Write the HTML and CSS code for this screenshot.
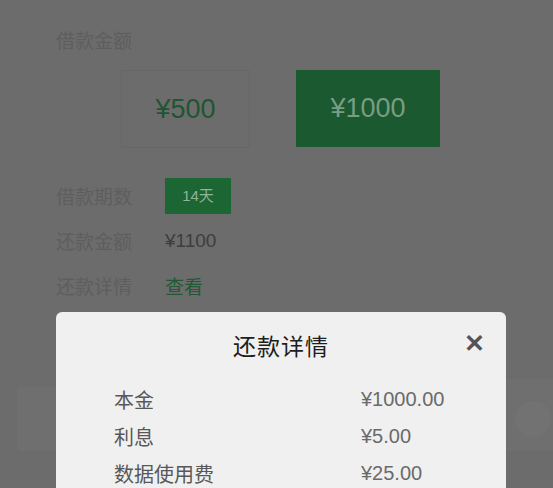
FILE: index.html
```html
<!DOCTYPE html>
<html lang="zh-CN">
<head>
  <meta charset="UTF-8">
  <meta name="viewport" content="width=device-width, initial-scale=1.0">
  <title>借款</title>
  <link rel="stylesheet" href="styles.css">
</head>
<body>
  <!-- 借款表单（被遮罩） -->
  <div class="page">
    <div class="section-title">借款金额</div>
    <div class="amounts">
      <div class="amount">¥500</div>
      <div class="amount selected">¥1000</div>
    </div>

    <div class="row">
      <span class="label">借款期数</span>
      <span class="tag">14天</span>
    </div>
    <div class="row">
      <span class="label">还款金额</span>
      <span class="value">¥1100</span>
    </div>
    <div class="row">
      <span class="label">还款详情</span>
      <span class="link">查看</span>
    </div>
    <div class="row">
      <span class="label">借款用途</span>
      <span class="value">借记卡</span>
    </div>

    <div class="bottom-bar">
      <div class="submit">立即借款</div>
      <div class="side-btn"><span class="dot"></span></div>
    </div>
  </div>

  <!-- 还款详情弹窗 -->
  <div class="modal">
    <div class="modal-head">
      <h2>还款详情</h2>
      <span class="close">✕</span>
    </div>
    <div class="detail">
      <span>本金</span>
      <span class="num">¥1000.00</span>
    </div>
    <div class="detail">
      <span>利息</span>
      <span class="num">¥5.00</span>
    </div>
    <div class="detail">
      <span>数据使用费</span>
      <span class="num">¥25.00</span>
    </div>
  </div>
</body>
</html>
```

FILE: styles.css
```css
body {
  margin: 0;
  background: #6c6c6c;
  font-family: "Liberation Sans", "Noto Sans CJK SC", sans-serif;
  overflow: hidden;
}
.page {
  padding: 28px 0 0 56px;
}
.section-title {
  font-size: 19px;
  line-height: 28px;
  color: #5e5e5e;
}
.amounts {
  display: flex;
  gap: 46px;
  margin: 14px 0 0 65px;
}
.amount {
  width: 127px;
  height: 76px;
  border: 1px solid #676767;
  display: flex;
  align-items: center;
  justify-content: center;
  font-size: 27px;
  color: #1f5632;
}
.amount.selected {
  width: 144px;
  height: 77px;
  border: none;
  background: #1b5930;
  color: #789d84;
}
.row {
  display: flex;
  align-items: center;
  height: 45px;
  font-size: 19px;
}
.amounts + .row {
  margin-top: 25px;
}
.label {
  width: 109px;
  color: #5e5e5e;
}
.tag {
  background: #1b6632;
  color: #8fb49a;
  font-size: 15px;
  width: 66px;
  height: 36px;
  line-height: 36px;
  text-align: center;
}
.value {
  color: #3d3d3d;
}
.link {
  color: #1f5a33;
}
.bottom-bar {
  display: flex;
  align-items: center;
  margin: 34px 0 0 -39px;
  height: 64px;
}
.submit {
  flex: 1;
  height: 64px;
  line-height: 64px;
  background: #6f6f6f;
  border-radius: 4px;
  color: #747474;
  font-size: 22px;
  padding-left: 213px;
}
.side-btn {
  width: 61px;
  height: 80px;
  background: #6f6f6f;
  border-radius: 12px 0 0 12px;
  display: flex;
  align-items: center;
  justify-content: center;
}
.dot {
  width: 36px;
  height: 36px;
  border-radius: 50%;
  background: #727272;
  margin-left: 20px;
}
.modal {
  position: absolute;
  left: 56px;
  top: 312px;
  width: 450px;
  height: 200px;
  background: #f0f0f0;
  border-radius: 6px;
}
.modal-head {
  position: relative;
  height: 66px;
  display: flex;
  align-items: center;
  justify-content: center;
}
.modal-head h2 {
  margin: 0;
  font-size: 23px;
  font-weight: normal;
  color: #1e1e1e;
  letter-spacing: 1px;
}
.close {
  position: absolute;
  right: 21px;
  top: 17px;
  font-size: 25px;
  font-weight: bold;
  color: #555;
}
.detail {
  display: flex;
  align-items: center;
  height: 37px;
  padding-left: 58px;
  font-size: 20px;
  color: #585858;
}
.modal-head + .detail {
  margin-top: 3px;
}
.detail span:first-child {
  width: 247px;
}
.num {
  color: #6a6a6a;
}
```
